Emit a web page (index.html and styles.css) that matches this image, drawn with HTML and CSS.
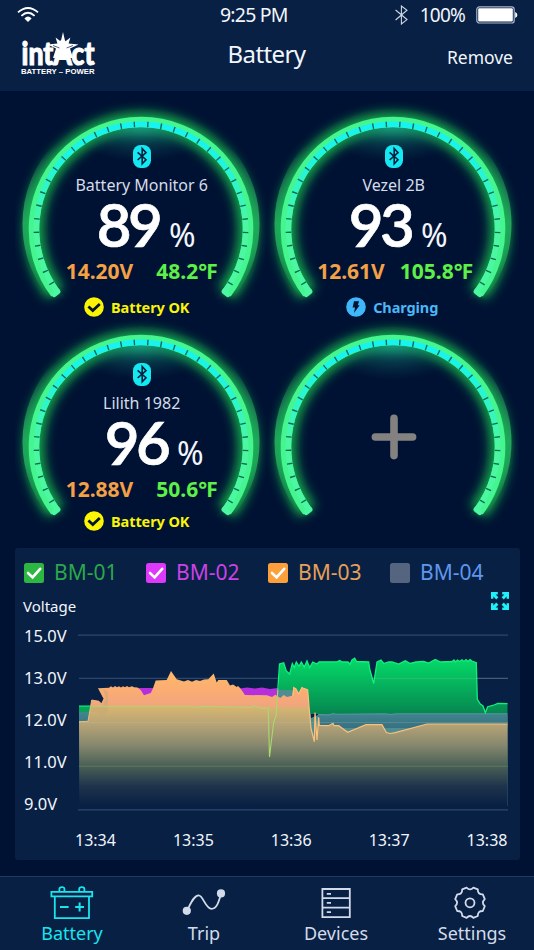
FILE: index.html
```html
<!DOCTYPE html>
<html lang="en">
<head>
    <meta charset="UTF-8">
    <meta name="viewport" content="width=device-width, initial-scale=1.0">
    <title>Battery - intAct Battery Power</title>
    <link rel="stylesheet" href="styles.css">
</head>
<body>

<!-- Shared shapes -->
<svg class="defs" width="0" height="0">
    <defs>
        <linearGradient id="ringInner" gradientUnits="userSpaceOnUse" x1="0" y1="24" x2="0" y2="125">
            <stop offset="0" stop-color="#16f3f3"/>
            <stop offset="0.35" stop-color="#1cf4e4"/>
            <stop offset="1" stop-color="#4cf7a2"/>
        </linearGradient>
        <linearGradient id="ringHalo" gradientUnits="userSpaceOnUse" x1="0" y1="45" x2="0" y2="200">
            <stop offset="0" stop-color="#2a9d68" stop-opacity="0"/>
            <stop offset="0.5" stop-color="#2a9d68" stop-opacity="0.95"/>
            <stop offset="0.65" stop-color="#2a9d68" stop-opacity="0.85"/>
            <stop offset="1" stop-color="#2a9d68" stop-opacity="0"/>
        </linearGradient>
        <radialGradient id="topGlow" gradientUnits="userSpaceOnUse" cx="0" cy="0" r="72" gradientTransform="translate(126 26) scale(1 0.5)">
            <stop offset="0" stop-color="#17a08c" stop-opacity="0.8"/>
            <stop offset="0.5" stop-color="#128072" stop-opacity="0.35"/>
            <stop offset="1" stop-color="#0b5a60" stop-opacity="0"/>
        </radialGradient>
        <filter id="blur" x="-20%" y="-20%" width="140%" height="140%">
            <feGaussianBlur stdDeviation="5.5"/>
        </filter>
        <symbol id="gauge" viewBox="0 0 252 218">
            <circle cx="126" cy="124" r="112" fill="none" stroke="url(#ringHalo)" stroke-width="13"/>
            <path d="M40.5 193.4A107 107 0 1 1 211.5 193.4" fill="none" stroke="#17b94f" stroke-width="20" stroke-opacity="0.9" filter="url(#blur)"/>
            <circle cx="126" cy="129" r="102" fill="url(#topGlow)"/>
            <path d="M40.5 193.4A107 107 0 1 1 211.5 193.4" fill="none" stroke="#45f58f" stroke-width="10.6"/>
            <path d="M39.2 194.6L43 191.5M212.8 194.6L209 191.5" stroke="#4cf7a2" stroke-width="5" stroke-linecap="round"/>
            <path d="M42.5 191.9A104.6 104.6 0 1 1 209.5 191.9" fill="none" stroke="url(#ringInner)" stroke-width="5.4"/>
            <path d="M42.5 191.9A104.6 104.6 0 1 1 209.5 191.9" fill="none" stroke="#0b6b52" stroke-width="5.6" pathLength="254" stroke-dasharray="0.75 6.6" stroke-dashoffset="-5.4"/>
        </symbol>
        <symbol id="bluetooth" viewBox="0 0 18 23">
            <rect width="18" height="23" rx="7.5" fill="#14e8f2"/>
            <path d="M4.6 7.4L13 14.7L9.2 18.8V3.6L13 7.6L4.6 15" fill="none" stroke="#02203f" stroke-width="1.6"/>
        </symbol>
        <symbol id="ok" viewBox="0 0 20 20">
            <circle cx="10" cy="10" r="9.8" fill="#fbf505"/>
            <path d="M4.4 9.4L8.8 13.6L15.8 7" fill="none" stroke="#03142f" stroke-width="2.7"/>
        </symbol>
        <symbol id="bolt" viewBox="0 0 20 20">
            <circle cx="10" cy="10" r="9.8" fill="#3fb7fa"/>
            <path d="M8 4.2H13L11.8 8.2H13.6L8 16L9 10.6H6.6Z" fill="#03142f"/>
        </symbol>
        <symbol id="check" viewBox="0 0 20 20">
            <path d="M4 10L8.6 14.4L16.2 5.8" fill="none" stroke="#fff" stroke-width="2.6" stroke-linecap="round"/>
        </symbol>
    </defs>
</svg>

<header class="header">
    <div class="status-bar">
        <svg class="wifi" width="22" height="17" viewBox="0 0 22 17" fill="none" stroke="#fff" stroke-width="1.9">
            <path d="M1 6.4Q11 -2.6 21 6.4"/>
            <path d="M4.4 9.9Q11 3.8 17.6 9.9"/>
            <path d="M7.4 12.4Q11 8.8 14.6 12.4L11 16Z" fill="#fff" stroke="none"/>
        </svg>
        <span class="clock">9:25 PM</span>
        <div class="status-right">
            <svg width="13" height="20" viewBox="0 0 13 20" fill="none" stroke="#cfd8e6" stroke-width="1.1">
                <path d="M0.6 5L12 14.6L6.4 19V1L12 5.2L0.6 15"/>
            </svg>
            <span class="charge">100%</span>
            <svg width="42" height="18" viewBox="0 0 42 18">
                <rect x="0.8" y="0.8" width="37.4" height="16.2" rx="2.6" fill="none" stroke="#a9b5c8" stroke-width="1.2"/>
                <rect x="2.2" y="2.2" width="34.6" height="13.4" rx="1" fill="#fff"/>
                <path d="M39.2 6V12Q41.4 11 41.4 9T39.2 6Z" fill="#fff"/>
            </svg>
        </div>
    </div>
    <div class="title-bar">
        <svg class="logo" width="76" height="44" viewBox="0 0 76 44" fill="#fff">
            <path d="M43 0L45.2 9.4L50.4 5.4L48.6 11.4L58.5 12.6L50 16.5L53 26H33L36 16.5L27.5 12.6L37.4 11.4L35.6 5.4L40.8 9.4Z"/>
            <text class="logo-name" x="1.5" y="33" textLength="73" lengthAdjust="spacingAndGlyphs">intAct</text>
            <path d="M33 13.5L39.5 16M53 13.5L46.5 16" fill="none" stroke="#082044" stroke-width="0.7"/>
            <text class="logo-sub" x="1" y="42" textLength="73.5" lengthAdjust="spacingAndGlyphs">BATTERY – POWER</text>
        </svg>
        <h1>Battery</h1>
        <a class="remove" href="#">Remove</a>
    </div>
</header>

<main>
    <section class="gauges">
        <div class="gauge">
            <svg class="ring"><use href="#gauge"/></svg>
            <div class="gauge-info">
                <svg class="bt"><use href="#bluetooth"/></svg>
                <div class="name">Battery Monitor 6</div>
                <div class="level"><b>89</b><span>%</span></div>
                <div class="readings"><span class="volt">14.20V</span><span class="temp">48.2℉</span></div>
                <div class="state ok"><svg><use href="#ok"/></svg>Battery OK</div>
            </div>
        </div>
        <div class="gauge">
            <svg class="ring"><use href="#gauge"/></svg>
            <div class="gauge-info">
                <svg class="bt"><use href="#bluetooth"/></svg>
                <div class="name">Vezel 2B</div>
                <div class="level"><b>93</b><span>%</span></div>
                <div class="readings wide"><span class="volt">12.61V</span><span class="temp">105.8℉</span></div>
                <div class="state charging"><svg><use href="#bolt"/></svg>Charging</div>
            </div>
        </div>
        <div class="gauge">
            <svg class="ring"><use href="#gauge"/></svg>
            <div class="gauge-info low">
                <svg class="bt"><use href="#bluetooth"/></svg>
                <div class="name">Lilith 1982</div>
                <div class="level shifted"><b>96</b><span>%</span></div>
                <div class="readings"><span class="volt">12.88V</span><span class="temp">50.6℉</span></div>
                <div class="state ok"><svg><use href="#ok"/></svg>Battery OK</div>
            </div>
        </div>
        <div class="gauge">
            <svg class="ring"><use href="#gauge"/></svg>
            <svg class="plus" width="46" height="46" viewBox="0 0 46 46" stroke="#848281" stroke-width="7.6" stroke-linecap="round">
                <path d="M23 4.4V41.6M4.4 23H41.6"/>
            </svg>
        </div>
    </section>

    <section class="panel">
        <div class="legend">
            <div class="item bm1"><svg><use href="#check"/></svg>BM-01</div>
            <div class="item bm2"><svg><use href="#check"/></svg>BM-02</div>
            <div class="item bm3"><svg><use href="#check"/></svg>BM-03</div>
            <div class="item bm4"><svg></svg>BM-04</div>
        </div>
        <div class="chart-head">
            <span>Voltage</span>
            <svg width="18" height="18" viewBox="0 0 18 18" fill="#1ff1f7">
                <path d="M0 0H6.8V2.4H4.6L7.4 5.2L5.2 7.4L2.4 4.6V6.8H0Z"/>
                <path d="M18 0H11.2V2.4H13.4L10.6 5.2L12.8 7.4L15.6 4.6V6.8H18Z"/>
                <path d="M0 18H6.8V15.6H4.6L7.4 12.8L5.2 10.6L2.4 13.4V11.2H0Z"/>
                <path d="M18 18H11.2V15.6H13.4L10.6 12.8L12.8 10.6L15.6 13.4V11.2H18Z"/>
            </svg>
        </div>
        <div class="chart">
            <div class="y-axis">
                <span>15.0V</span>
                <span>13.0V</span>
                <span>12.0V</span>
                <span>11.0V</span>
                <span>9.0V</span>
            </div>
            <svg class="plot" width="430" height="190" viewBox="78 625 430 190">
                <defs>
                    <linearGradient id="fillGreen" gradientUnits="userSpaceOnUse" x1="0" y1="660" x2="0" y2="714">
                        <stop offset="0" stop-color="#04d867"/>
                        <stop offset="1" stop-color="#068650"/>
                    </linearGradient>
                    <linearGradient id="fillTeal" gradientUnits="userSpaceOnUse" x1="0" y1="712" x2="0" y2="800">
                        <stop offset="0" stop-color="#41868e"/>
                        <stop offset="0.25" stop-color="#33687e"/>
                        <stop offset="1" stop-color="#082044"/>
                    </linearGradient>
                    <linearGradient id="fillOrange" gradientUnits="userSpaceOnUse" x1="0" y1="676" x2="0" y2="806">
                        <stop offset="0" stop-color="#fdb669"/>
                        <stop offset="0.1" stop-color="#fbad72"/>
                        <stop offset="0.235" stop-color="#f1a47e"/>
                        <stop offset="0.24" stop-color="#d7b571"/>
                        <stop offset="0.38" stop-color="#b4a276"/>
                        <stop offset="0.53" stop-color="#87886e"/>
                        <stop offset="0.69" stop-color="#4a6056"/>
                        <stop offset="0.85" stop-color="#1e334b"/>
                        <stop offset="1" stop-color="#082044"/>
                    </linearGradient>
                </defs>
                <path d="M78 635.2H508M79 678.3H508M79 722.5H508" stroke="#2e4669" stroke-width="1.2"/>
                <!-- BM-02 -->
                <path d="M104 689L135 688H165L180 689L240 688.5L247 687.5L255 688.5L262 687.5L270 689L278 688L285 689.5L300 690V800H110Z" fill="#b52fdc"/>
                <!-- BM-04 -->
                <path d="M79 712H92V806H79Z" fill="url(#fillTeal)"/>
                <path d="M278 690L280 688L282 690L285 688L287 689.5L290 687L293 690L300 688L309 690L311 718L318 715H507.5V806H278Z" fill="#4f8d91"/>
                <!-- BM-01 -->
                <path d="M79 706.3H92V712H79Z" fill="#05a456"/>
                <path d="M278.5 690L279.5 664L280.5 663.2L283.7 662.7L286.3 671L289.7 674L292.3 663.5L294.3 667.5L296.3 662L299 666.3L301.3 662L304.3 667L307 661L309.7 667.5L312.7 662L317 664L319 661.8H337L339.7 660.6L342 662H348L350 664.3L352 660L354.7 658.2L356.5 661.5L368.7 662L369.7 669L373.7 683.5L377 662L381 660L383.7 663.5L388.7 662L392 662L398.7 664L405.3 660.8L410.3 663.5L416 662L423.7 661.4L428.7 663L435.3 659.5L440.3 662L452 661.5L454 660L455.5 662L457.5 660L459.5 661.5L462 659.8L464 661.5L466 659.6L468 661.5L470 659.6L472 661L476.3 662.7L477.3 699.3L480.3 704L483 706L485.3 712L487.7 706.7L493 705.5L497.7 703.4H507.5V714H309L307 690L303 687L298 692L294 687.5L292 690Z" fill="url(#fillGreen)"/>
                <path d="M318 714H507.5V728H318Z" fill="url(#fillTeal)"/>
                <path d="M318 714.6L329 715L333 713.5L336 714.3L385 713.8L391 714.5L396 713.7H507.5" fill="none" stroke="#5894a3" stroke-width="1.1"/>
                <!-- BM-03 -->
                <path fill="url(#fillOrange)" d="M79 721.7L88 721.3L91.7 700L99 701.3L101.5 704L104 698.7L98.5 688.3L109 687.7L111 686.3L113 687.4L115 686L117 687.3L119 686.3L121 687.4L123 686.2L125 687.3L127 686L129 687.3L132 686.3L134 687.3L137.5 687.5L140.7 690L144 695.3L150.7 693L152.7 689L155.7 680.5L166.7 680L171 671L176.7 679.3L184 681.5L188 680L192 681.7L196 680L200 681L204 679.6L208.3 679.3L213.7 673.5L216.7 682.5L218.3 680L226.7 680L230 685.5L233 684.5L236.7 687L238 686L240.3 688.3L245 695L267 695.3L272 697L275.3 694.7L280.3 698L283.7 695L287 697L292 695.7L293.7 687.5L296 689L298.7 694L302 687.5L307.7 690L309.3 710L311 728.3L314.3 741.7L315 712.5L317 738L318.7 717.3L319.3 725.5L328.7 725.7L333 723.3L334 725.7L338.7 725.7L347.7 732.3L366 724.7H382L386.3 732.5L390.3 733.5L395.3 732.7L427 724H507.5V806H79.5Z"/>
                <path d="M293 695.7L293.7 687.5L296 689L298.7 694L302 687.5L307.7 690L309.3 710L311 728.3L314.3 741.7L315 712.5L317 740L318.7 717.3L319.3 725.5L328.7 725.7L333 723.3L334 725.7L338.7 725.7L347.7 732.3L366 724.7H382L386.3 732.5L390.3 733.5L395.3 732.7L427 724H507.5" fill="none" stroke="#fcc07a" stroke-width="1.2"/>
                <path d="M79 721.7L88 721.3L91.7 700L99 701.3L101.5 704L104 698.7L98.5 688.3" fill="none" stroke="#f9bd7b" stroke-width="0.9"/>
                <path d="M90.5 712H96L101.5 716L108 711.5V692L103 689L106 698L102.5 706H91Z" fill="#c9a874" fill-opacity="0.55"/>
                <path d="M90.5 706.2H192L196 707.5L202 706.2L215 706.5L251 707.5L254 705.5L258 707.5L262 708.3H268.3L269.5 757L273.7 722L276 716L277.8 690" fill="none" stroke="#a9d96b" stroke-width="1.1"/>
                <path d="M79 706.2H90.5M277.8 690L279.5 664L283.7 662.7L286.3 671L289.7 674L292.3 663.5L294.3 667.5L296.3 662L299 666.3L301.3 662L304.3 667L307 661L309.7 667.5L312.7 662L317 664L319 661.8H337L339.7 660.6L342 662H348L350 664.3L352 660L354.7 658.2L356.5 661.5L368.7 662L369.7 669L373.7 683.5L377 662L381 660L383.7 663.5L388.7 662L392 662L398.7 664L405.3 660.8L410.3 663.5L416 662L423.7 661.4L428.7 663L435.3 659.5L440.3 662L452 661.5L454 660L455.5 662L457.5 660L459.5 661.5L462 659.8L464 661.5L466 659.6L468 661.5L470 659.6L472 661L476.3 662.7L477.3 699.3L480.3 704L483 706L485.3 712.7L487.7 706.7L493 705.5L497.7 703.4L507.5 703.7" fill="none" stroke="#12f07c" stroke-width="1.3"/>
                <path d="M79 766.3H508" stroke="#5d7761" stroke-width="1.1"/>
                <path d="M79 722.5H508M373 678.3H508" stroke="#b9c9b0" stroke-width="1" stroke-opacity="0.22"/>
                <path d="M78 809.8H508" stroke="#2e4669" stroke-width="1.3"/>
            </svg>
        </div>
        <div class="x-axis">
            <span>13:34</span>
            <span>13:35</span>
            <span>13:36</span>
            <span>13:37</span>
            <span>13:38</span>
        </div>
    </section>
</main>

<nav class="tabs">
    <a class="tab active" href="#">
        <svg width="44" height="34" viewBox="0 0 44 34" fill="none" stroke="currentColor" stroke-width="1.8">
            <path d="M1.4 5.8H42.2V10.4H1.4ZM4.8 10.4V32.2H39V10.4M9.4 5.8V3Q9.4 1.2 12 1.2T14.4 3V5.8M29.2 5.8V3Q29.2 1.2 31.8 1.2T34.4 3V5.8"/>
            <path d="M10 21H18.6M25.2 21H34M29.6 16.6V25.4" stroke-width="2"/>
        </svg>
        <span>Battery</span>
    </a>
    <a class="tab" href="#">
        <svg width="44" height="34" viewBox="0 0 44 34" fill="none" stroke="currentColor" stroke-width="1.8">
            <path d="M5 24.6C9 17 12 9.4 16.6 9.4S23.4 22.8 29.6 22.8C35 22.8 37 15 39 8"/>
            <circle cx="4.8" cy="24.8" r="4.1" fill="currentColor" stroke="none"/>
            <circle cx="39" cy="7.4" r="4.1" fill="currentColor" stroke="none"/>
        </svg>
        <span>Trip</span>
    </a>
    <a class="tab" href="#">
        <svg width="44" height="34" viewBox="0 0 44 34" fill="none" stroke="currentColor" stroke-width="1.8">
            <path d="M8.4 3H35.8V31.2H8.4ZM8.4 12.2H35.8M8.4 21.6H35.8M12.8 7.8H17M12.8 16.9H17M12.8 26.2H17"/>
        </svg>
        <span>Devices</span>
    </a>
    <a class="tab settings" href="#">
        <svg width="44" height="34" viewBox="0 0 44 34" fill="none" stroke="currentColor" stroke-width="1.8" stroke-linejoin="round">
            <path d="M18.6 1.6Q22 5.2 25.4 1.6L29.8 3.4Q29.7 8.6 34.8 8.4L36.8 13.2Q33 16.8 36.8 20.2L34.8 25Q29.7 24.8 29.8 30L25.4 31.8Q22 28.2 18.6 31.8L14.2 30Q14.3 24.8 9.2 25L7.2 20.2Q11 16.8 7.2 13.2L9.2 8.4Q14.3 8.6 14.2 3.4Z"/>
            <circle cx="22" cy="16.8" r="4.5"/>
        </svg>
        <span>Settings</span>
    </a>
</nav>

</body>
</html>
```
FILE: styles.css
```css
* {
    box-sizing: border-box;
}

body {
    font-family: "Noto Sans", "Open Sans", "Noto Sans CJK SC", sans-serif;
    background-color: #001233;
    color: #f2f6fc;
    margin: 0;
    width: 534px;
    height: 950px;
    overflow: hidden;
    display: flex;
    flex-direction: column;
}

svg {
    display: block;
    flex-shrink: 0;
}

.defs {
    position: absolute;
}

a {
    color: inherit;
    text-decoration: none;
}

/* Header */
.header {
    height: 91px;
    background-color: #082044;
}

.status-bar {
    display: grid;
    grid-template-columns: 203px 90px 1fr;
    align-items: center;
    height: 30px;
    padding: 0 16px 0 17px;
}

.wifi {
    margin-top: -2px;
}

.clock {
    font-size: 19.5px;
    letter-spacing: -0.8px;
    margin-top: -2px;
}

.status-right {
    display: flex;
    justify-content: flex-end;
    align-items: center;
}

.charge {
    font-size: 19px;
    letter-spacing: -0.8px;
    margin: 0 11px 0 12px;
}

.title-bar {
    display: grid;
    grid-template-columns: 1fr auto 1fr;
    height: 50px;
    padding: 0 21px 0 20px;
}

.logo {
    margin-top: 2px;
    overflow: visible;
}

.logo-name {
    font-family: Lato, sans-serif;
    font-weight: 900;
    font-size: 32px;
    stroke: #fff;
    stroke-width: 1px;
}

.logo-sub {
    font-family: "Liberation Sans", sans-serif;
    font-weight: 700;
    font-size: 7.8px;
}

h1 {
    margin: 7px 0 0;
    font-size: 24px;
    font-weight: 400;
    line-height: 34px;
    letter-spacing: -0.6px;
}

.remove {
    justify-self: end;
    margin-top: 14px;
    font-size: 17.5px;
    line-height: 26px;
}

/* Gauges */
.gauges {
    display: grid;
    grid-template-columns: 252px 252px;
    grid-auto-rows: 218px;
    padding: 9px 0 0 14.7px;
}

.gauge {
    display: grid;
}

.ring,
.gauge-info,
.plus {
    grid-area: 1 / 1;
}

.ring {
    width: 252px;
    height: 218px;
    overflow: visible;
}

.plus {
    margin: 96px 0 0 104px;
}

.gauge-info {
    display: flex;
    flex-direction: column;
    align-items: center;
    padding: 44.5px 0 0 2px;
}

.bt {
    width: 18px;
    height: 23px;
}

.name {
    margin-top: 5px;
    font-size: 16px;
    line-height: 24px;
    color: #d5dcea;
}

.level {
    display: flex;
    align-items: baseline;
    height: 62px;
    margin-top: -2px;
    margin-left: 9px;
}

.level b {
    font-family: Lato, sans-serif;
    font-size: 60px;
    font-weight: 600;
    line-height: 58px;
    letter-spacing: -3.6px;
    color: #fff;
    -webkit-text-stroke: 0.7px #fff;
}

.level span {
    font-size: 32px;
    line-height: 44px;
    margin-left: 10px;
}

.shifted {
    margin-left: 25px;
}

.readings {
    display: flex;
    gap: 23px;
    height: 30px;
    margin-top: 2px;
    font-size: 21px;
    line-height: 24px;
    font-weight: 700;
}

.wide {
    gap: 15px;
    margin-left: 3px;
}

.volt {
    color: #f3a047;
}

.temp {
    color: #5cf048;
}

.state {
    display: flex;
    align-items: center;
    gap: 7px;
    margin-top: 8px;
    margin-right: 10px;
    font-size: 14.5px;
    line-height: 20px;
    font-weight: 700;
    letter-spacing: -0.1px;
}

.low .state {
    margin-top: 4px;
}

.state svg {
    width: 20px;
    height: 20px;
}

.ok {
    color: #fbf505;
}

.charging {
    color: #4ab7f8;
    margin-right: 3px;
}

/* Voltage panel */
.panel {
    width: 505px;
    height: 312px;
    margin: 12px 0 0 14.5px;
    background-color: #082044;
    border-radius: 3px;
}

.legend {
    display: grid;
    grid-template-columns: repeat(4, 122px);
    padding: 10px 0 0 9px;
}

.item {
    display: flex;
    align-items: center;
    gap: 10.5px;
    font-size: 21px;
    line-height: 29px;
}

.item svg {
    width: 20px;
    height: 20px;
    border-radius: 2.5px;
}

.bm1 { color: #2ba84a; }
.bm2 { color: #cc42e6; }
.bm3 { color: #e6a057; }
.bm4 { color: #5f97ee; }

.bm1 svg { background-color: #2db742; }
.bm2 svg { background-color: #dc39fb; }
.bm3 svg { background-color: #fda03c; }
.bm4 svg { background-color: #56657f; }

.chart-head {
    display: flex;
    justify-content: space-between;
    padding: 5px 10.5px 0 8.5px;
    height: 38px;
    font-size: 15px;
    line-height: 28px;
}

.chart {
    display: flex;
    height: 188px;
}

.y-axis {
    width: 63.5px;
    padding-left: 9.5px;
    font-size: 16.5px;
    line-height: 42px;
    display: flex;
    flex-direction: column;
    margin-top: -10px;
}

.x-axis {
    display: flex;
    justify-content: space-between;
    padding: 15px 12px 0 60.5px;
    font-size: 16px;
    line-height: 24px;
}

/* Bottom tabs */
.tabs {
    margin-top: auto;
    height: 74px;
    display: grid;
    grid-template-columns: repeat(4, 132px);
    padding-left: 6px;
    background-color: #082044;
    border-top: 1px solid #233a5d;
}

.tab {
    display: flex;
    flex-direction: column;
    align-items: center;
    padding-top: 9px;
    font-size: 18px;
    line-height: 26px;
    color: #d3dbea;
}

.settings {
    padding-left: 3px;
}

.settings span {
    margin-left: 5px;
}

.active {
    color: #1ae4ee;
}
```
